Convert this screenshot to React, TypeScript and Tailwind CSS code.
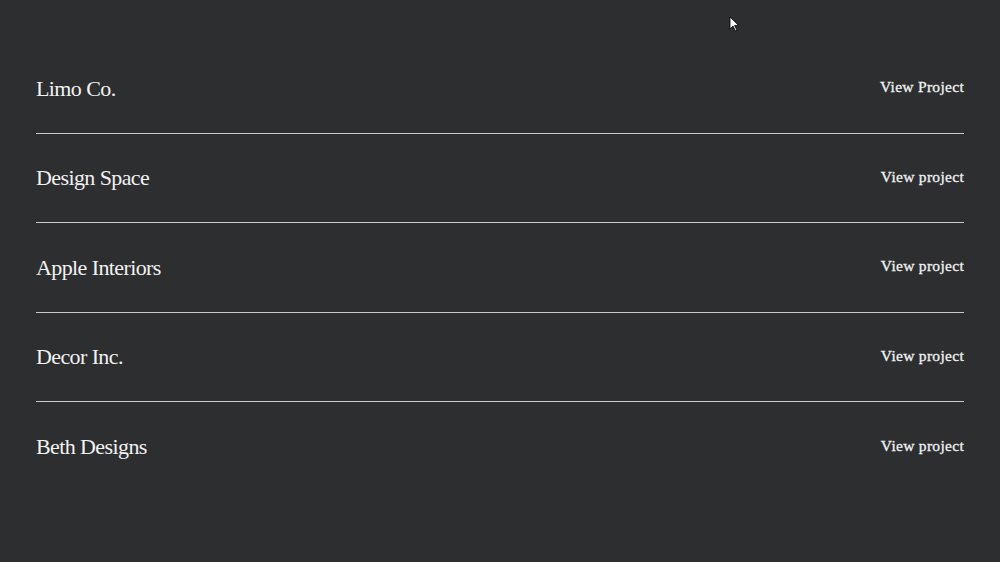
import React from "react";

const items = [
  { name: "Limo Co.", link: "View Project" },
  { name: "Design Space", link: "View project" },
  { name: "Apple Interiors", link: "View project" },
  { name: "Decor Inc.", link: "View project" },
  { name: "Beth Designs", link: "View project" },
];

export default function App() {
  return (
    <div
      className="relative w-full h-[562px] bg-[#2d2e30] overflow-hidden"
      style={{ fontFamily: '"Liberation Serif", "DejaVu Serif", serif' }}
    >
      <div className="px-[36px] pt-[44px]">
        {items.map((it, i) => (
          <div
            key={it.name}
            className={`flex items-center justify-between h-[89.5px] ${
              i < items.length - 1 ? "border-b border-[#c9c9c9]" : ""
            }`}
          >
            <span className="text-[22px] text-[#f2f2f2] tracking-[-0.6px]">{it.name}</span>
            <span className="text-[15.5px] text-[#f2f2f2] tracking-[0.3px] mb-[3px] [-webkit-text-stroke:0.3px_#f2f2f2]">
              {it.link}
            </span>
          </div>
        ))}
      </div>
      <svg
        className="absolute left-[729px] top-[16px]"
        width="11"
        height="16"
        viewBox="0 0 11 16"
      >
        <path
          d="M1 1 L1 13 L4 10 L6.5 15 L8 14.3 L5.6 9.4 L9.6 9.4 Z"
          fill="#ffffff"
          stroke="#000000"
          strokeWidth="0.8"
        />
      </svg>
    </div>
  );
}
